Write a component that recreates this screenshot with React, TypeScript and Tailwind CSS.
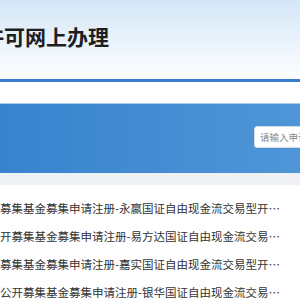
import React from 'react';

const items = [
    '募集基金募集申请注册-永嬴国证自由现金流交易型开放式指数证券投资基金',
    '开募集基金募集申请注册-易方达国证自由现金流交易型开放式指数证券投资基金',
    '募集基金募集申请注册-嘉实国证自由现金流交易型开放式指数证券投资基金',
    '公开募集基金募集申请注册-银华国证自由现金流交易型开放式指数证券投资基金',
];

export default function App() {
    return (
        <div className="w-[300px] h-[300px] overflow-hidden bg-white font-['Noto_Sans_CJK_SC',sans-serif]">
            {/* header */}
            <div className="h-[79px] bg-gradient-to-b from-[#d4e6f7] to-[#fdfeff] pt-[26px] overflow-hidden">
                <h1 className="ml-[-17px] whitespace-nowrap text-[21px] font-bold text-[#1e1e1e] leading-none">许可网上办理</h1>
            </div>
            <div className="h-[3px] bg-[#3a7dcf]" />
            <div className="h-[21px]" />

            {/* banner */}
            <div className="h-[70px] bg-gradient-to-r from-[#3883ce] to-[#4e96d7] border-t border-[#a9cdf0] flex items-start pl-[254px] pt-[22px]">
                <div className="h-[22px] w-[70px] shrink-0 bg-white border border-[#d6dbe3] rounded-[3px] flex items-center pl-[5px]">
                    <span className="text-[9.5px] text-[#8a8a8a] whitespace-nowrap">请输入申请事项</span>
                </div>
            </div>
            <div className="h-[12px] bg-[#f0f1f5]" />

            {/* list */}
            <ul className="pt-[10px]">
                {items.map((t) => (
                    <li key={t} className="h-[28px] flex items-center">
                        <span className="block w-[282px] truncate text-[11.5px] text-[#333]">{t}</span>
                    </li>
                ))}
            </ul>
        </div>
    );
}
